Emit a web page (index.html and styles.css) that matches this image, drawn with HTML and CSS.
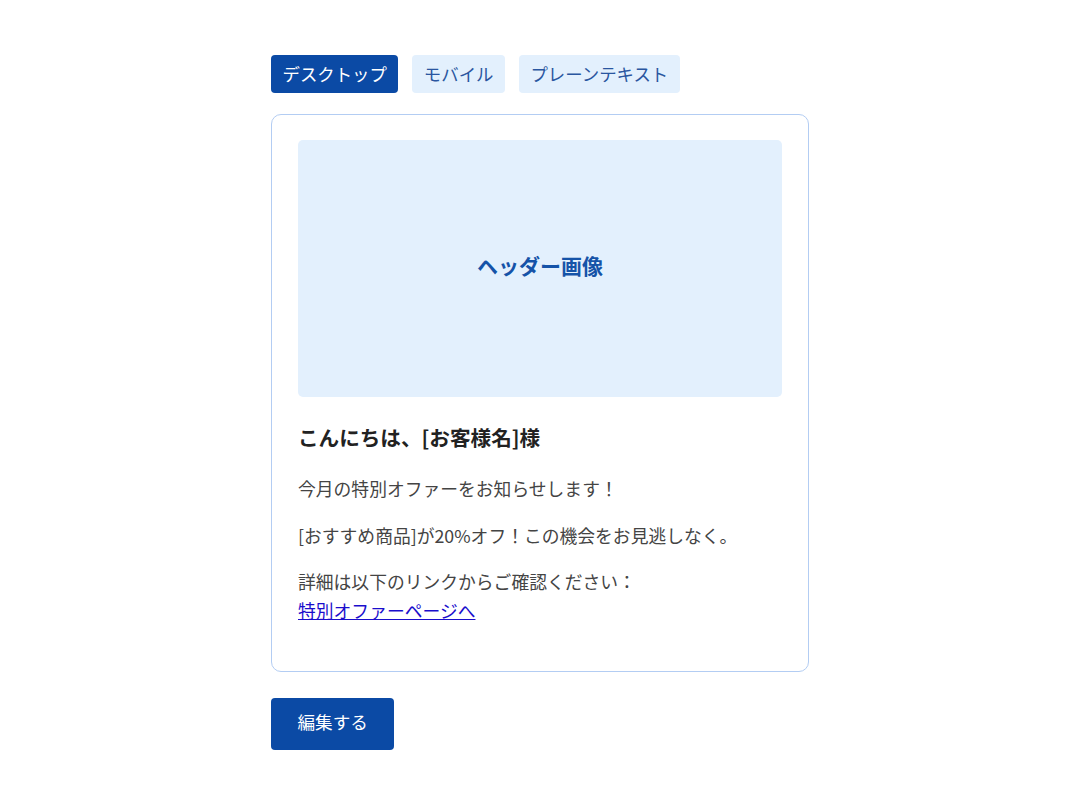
FILE: index.html
```html
<!DOCTYPE html>
<html lang="ja">
<head>
<meta charset="utf-8">
<title>メールプレビュー</title>
<link rel="stylesheet" href="styles.css">
</head>
<body>
<div class="wrap">
  <div class="tabs">
    <button class="tab active">デスクトップ</button>
    <button class="tab">モバイル</button>
    <button class="tab">プレーンテキスト</button>
  </div>
  <div class="card">
    <div class="hero">ヘッダー画像</div>
    <h2 class="greet">こんにちは、[お客様名]様</h2>
    <p class="para">今月の特別オファーをお知らせします！</p>
    <p class="para">[おすすめ商品]が20%オフ！この機会をお見逃しなく。</p>
    <p class="para">詳細は以下のリンクからご確認ください：<br><a href="#" class="link">特別オファーページへ</a></p>
  </div>
  <button class="edit">編集する</button>
</div>
</body>
</html>
```
FILE: styles.css
```css
html, body {
  margin: 0;
  padding: 0;
  background: #ffffff;
}
body {
  font-family: "Noto Sans CJK JP", "Noto Sans", sans-serif;
  color: #333333;
}
.wrap {
  width: 538px;
  margin: 0 auto;
  padding-top: 55px;
  display: flex;
  flex-direction: column;
  align-items: flex-start;
}
.tabs {
  display: flex;
  gap: 14px;
}
.tab {
  font-family: inherit;
  font-size: 17.4px;
  height: 38px;
  padding: 0 11.5px;
  border: none;
  border-radius: 4px;
  background: #e3f0fd;
  color: #2a56a0;
  line-height: 38px;
}
.tab.active {
  background: #0b4aa5;
  color: #ffffff;
}
.card {
  align-self: stretch;
  margin-top: 21px;
  border: 1px solid #b3cdf3;
  border-radius: 10px;
  padding: 25px 26px 26px;
}
.hero {
  box-sizing: border-box;
  height: 257px;
  padding-bottom: 7px;
  background: #e3f0fd;
  border-radius: 5px;
  display: flex;
  align-items: center;
  justify-content: center;
  font-size: 21px;
  font-weight: 700;
  color: #1553a8;
}
.greet {
  margin: 24px 0 21px;
  font-size: 20.6px;
  font-weight: 700;
  line-height: 32px;
  color: #222222;
}
.para {
  margin: 0 0 17.5px;
  font-size: 17.8px;
  line-height: 29px;
  color: #444444;
}
.para:last-child {
  margin-bottom: 20px;
}
.link {
  color: #1a0dcc;
  text-decoration: underline;
}
.edit {
  box-sizing: border-box;
  margin-top: 26px;
  font-family: inherit;
  font-size: 17.6px;
  height: 52px;
  padding: 0 26.5px 5px;
  border: none;
  border-radius: 4px;
  background: #0b4aa5;
  color: #ffffff;
}
```
